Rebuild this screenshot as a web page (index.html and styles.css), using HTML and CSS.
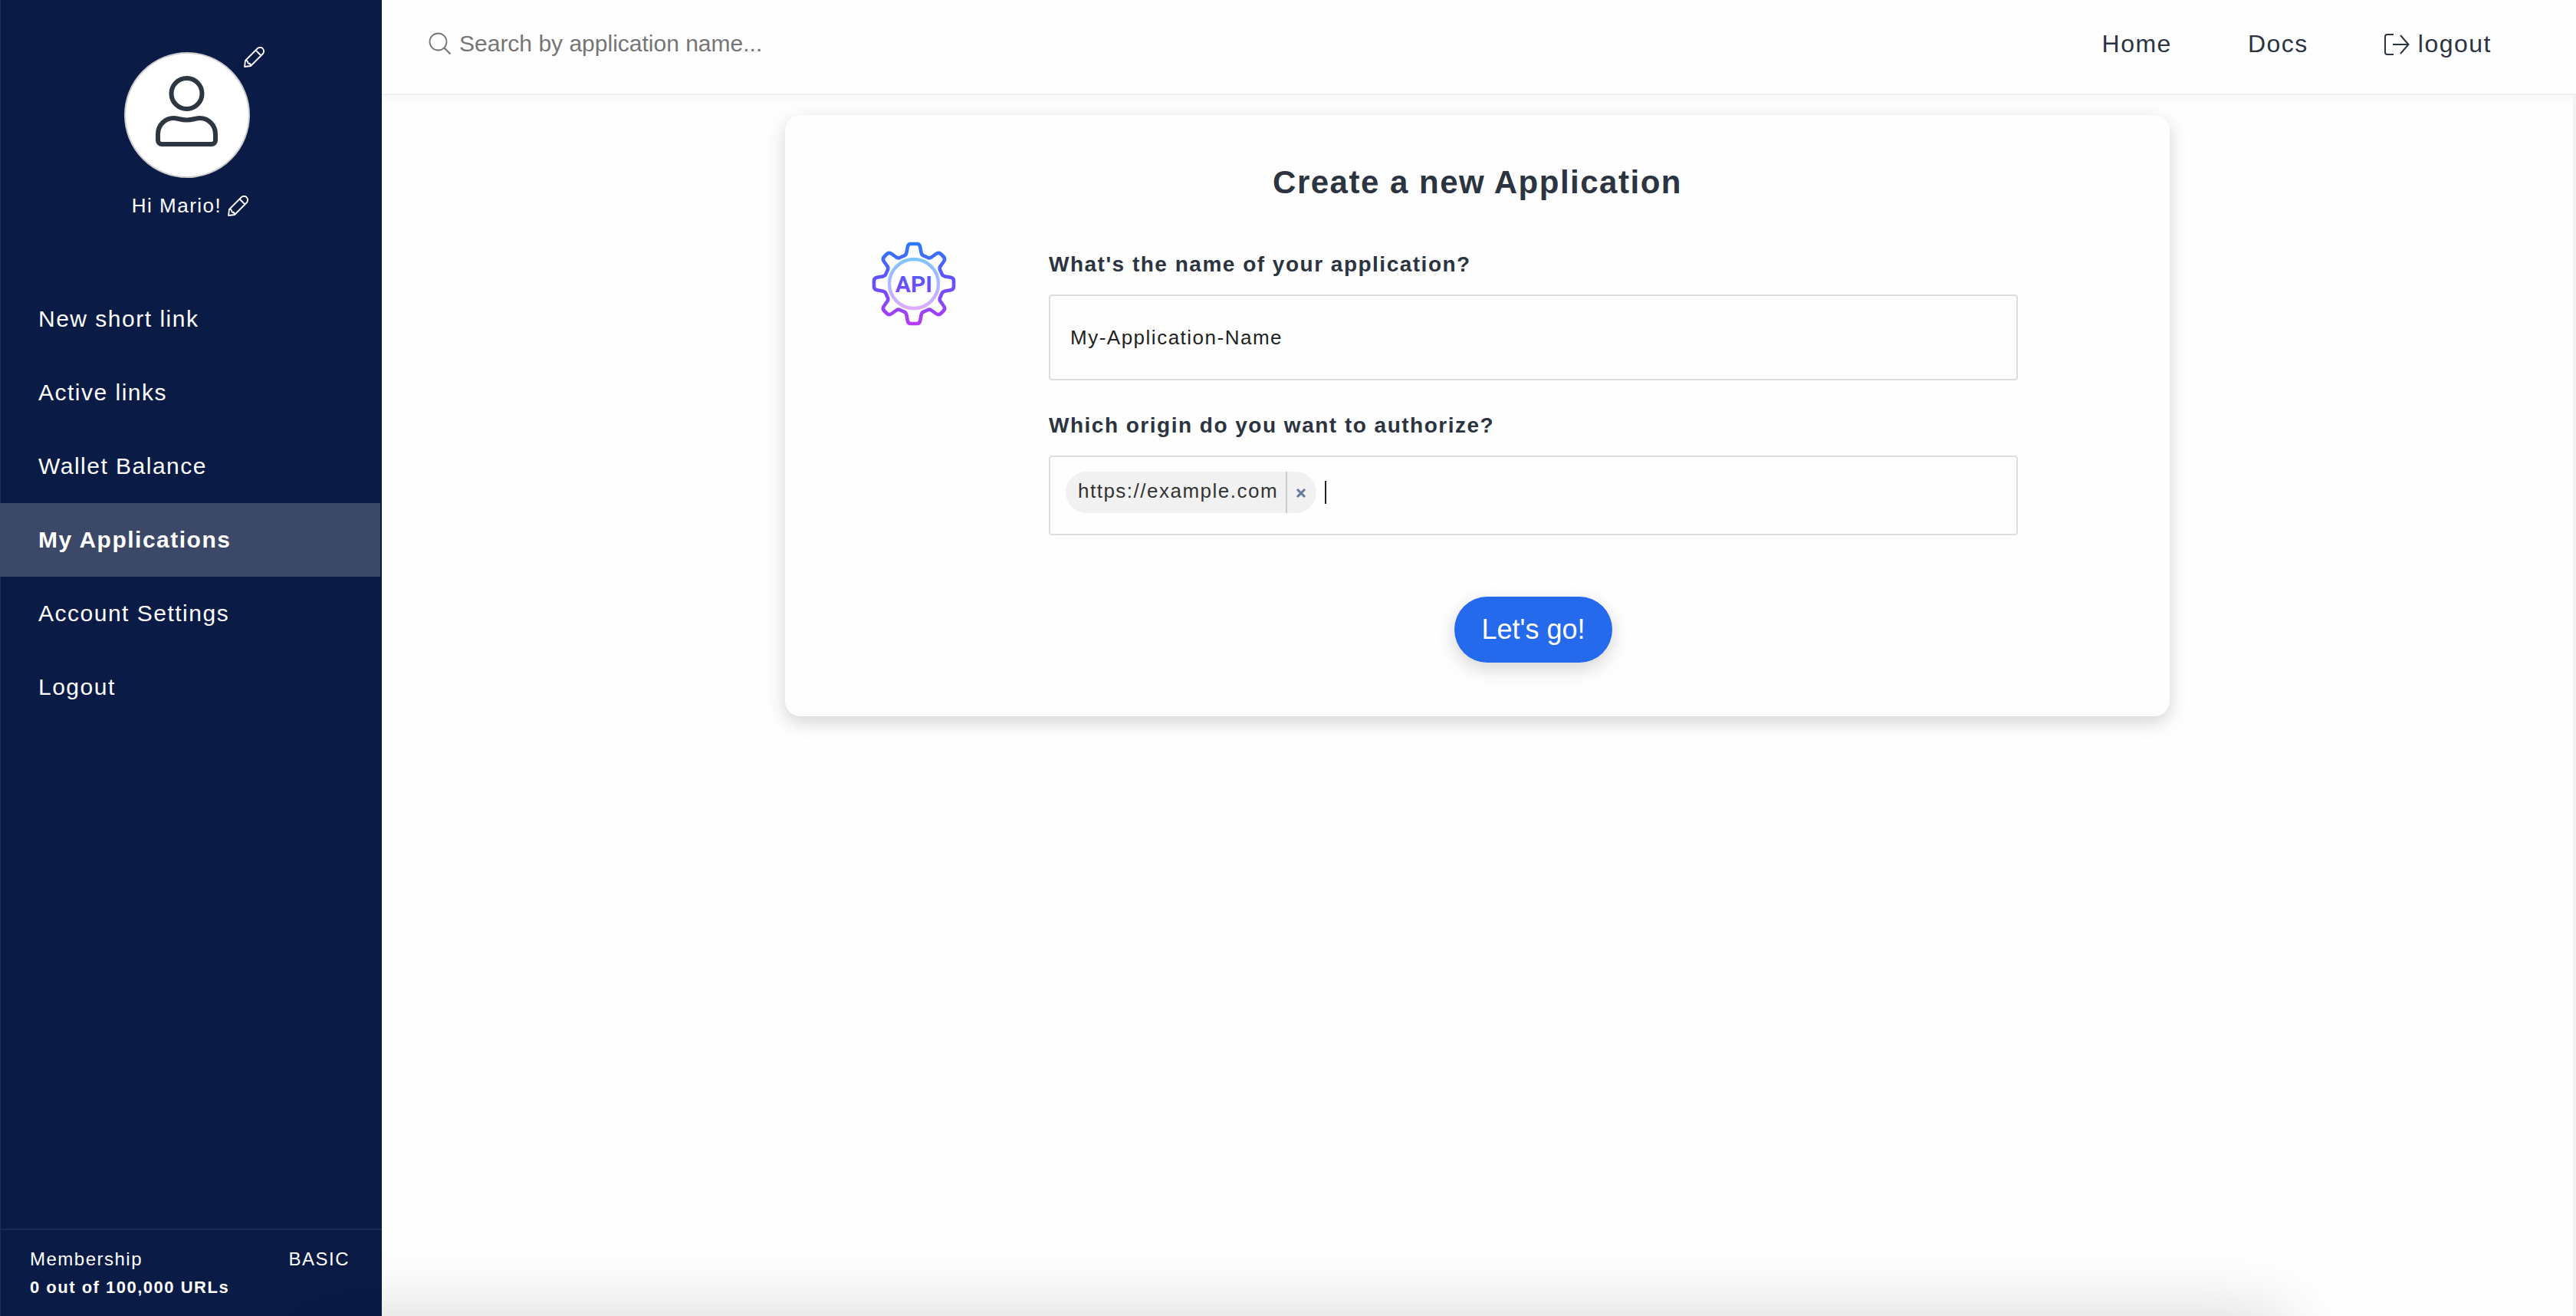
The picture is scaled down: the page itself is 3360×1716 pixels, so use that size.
FILE: index.html
```html
<!DOCTYPE html>
<html lang="en">
<head>
<meta charset="utf-8">
<meta name="viewport" content="width=device-width, initial-scale=1">
<title>Create a new Application</title>
<link rel="stylesheet" href="styles.css">
</head>
<body>
<svg class="sprite" aria-hidden="true">
  <symbol id="pencil" viewBox="0 0 27 27">
    <path d="M1 26 2 18 18 2Q21.500-.5 24.500 2 27.500 5.500 25 9L9 25ZM15.500 4.500 22.500 11.500M2 18Q5 17 5.500 21.500 9 21.500 9 25" fill="none" stroke="currentColor" stroke-width="1.800" stroke-linejoin="round"/>
  </symbol>
</svg>
<div class="app">
  <aside class="sidebar">
    <div class="profile">
      <div class="avatar">
        <svg class="avatar-icon" viewBox="203 99 82 92" aria-hidden="true">
          <g fill="none" stroke="currentColor" stroke-width="6">
            <circle cx="243.500" cy="122" r="20"/>
            <path d="M226.500 154C215 154 206 163.500 206 175V183a5 5 0 0 0 5 5H276a5 5 0 0 0 5-5V175C281 163.500 272 154 260.500 154c-5 0-9 2.500-17 2.500s-12-2.500-17-2.500z"/>
          </g>
        </svg>
        <button class="icon-button avatar-edit" type="button" aria-label="Edit picture"><svg><use href="#pencil"/></svg></button>
      </div>
      <div class="greeting">
        <span>Hi Mario!</span>
        <button class="icon-button" type="button" aria-label="Edit name"><svg><use href="#pencil"/></svg></button>
      </div>
    </div>
    <nav class="menu">
      <a href="#new">New short link</a>
      <a href="#links">Active links</a>
      <a href="#wallet">Wallet Balance</a>
      <a href="#applications" class="active" aria-current="page">My Applications</a>
      <a href="#settings">Account Settings</a>
      <a href="#logout">Logout</a>
    </nav>
    <div class="membership">
      <div class="plan"><span>Membership</span><span>BASIC</span></div>
      <div class="usage">0 out of 100,000 URLs</div>
    </div>
  </aside>
  <div class="main">
    <header class="topbar">
      <label class="search">
        <svg viewBox="0 0 30 30" aria-hidden="true"><g fill="none" stroke="currentColor" stroke-width="1.800"><circle cx="12.500" cy="12.500" r="11"/><path d="M20.500 20.500 28.500 28.500" stroke-width="2.200"/></g></svg>
        <input type="search" placeholder="Search by application name..." aria-label="Search">
      </label>
      <nav class="links">
        <a href="#home">Home</a>
        <a href="#docs">Docs</a>
        <a href="#logout"><svg viewBox="0 0 33 32" aria-hidden="true"><path d="M12 4H4Q1 4 1 7V27Q1 30 4 30H12M11 17H31.500M21 5 31.500 17 21 29" fill="none" stroke="currentColor" stroke-width="2"/></svg>logout</a>
      </nav>
    </header>
    <main class="content">
      <form class="card">
        <h1>Create a new Application</h1>
        <div class="card-body">
          <svg class="api-icon" viewBox="-55 -55 110 110" role="img" aria-label="API">
            <defs>
              <linearGradient id="outer" gradientUnits="userSpaceOnUse" x1="0" y1="-55" x2="0" y2="55">
                <stop offset="0" stop-color="#2b7bfb"/><stop offset=".5" stop-color="#6650fa"/><stop offset="1" stop-color="#b93af6"/>
              </linearGradient>
              <linearGradient id="inner" gradientUnits="userSpaceOnUse" x1="0" y1="-34" x2="0" y2="34">
                <stop offset="0" stop-color="#7cc6ff"/><stop offset="1" stop-color="#dfaaff"/>
              </linearGradient>
              <path id="quarter" d="M0-52H4Q7.500-52 8.200-48L9.500-41Q10-37 14-36L18.500-34Q21-33 23.500-35L29-39Q32.500-41.500 35.500-38.500L38.500-35.500Q41.500-32.500 39-29L35-23.500Q33-21 34-18.500L36-14Q37-10 41-9.500L48-8.200Q52-7.500 52-4V0"/>
              <mask id="gear" maskUnits="userSpaceOnUse" x="-55" y="-55" width="110" height="110">
                <g fill="none" stroke="#fff" stroke-width="4.600">
                  <use href="#quarter"/><use href="#quarter" transform="rotate(90)"/><use href="#quarter" transform="rotate(180)"/><use href="#quarter" transform="rotate(270)"/>
                </g>
              </mask>
            </defs>
            <rect x="-55" y="-55" width="110" height="110" fill="url(#outer)" mask="url(#gear)"/>
            <circle r="32" fill="none" stroke="url(#inner)" stroke-width="4.400"/>
            <text class="api-text" x="0" y="11" text-anchor="middle" fill="url(#outer)">API</text>
          </svg>
          <div class="fields">
            <label for="name">What's the name of your application?</label>
            <input class="box name" id="name" type="text" value="My-Application-Name">
            <label for="origin">Which origin do you want to authorize?</label>
            <div class="box tags">
              <span class="tag"><span class="tag-text">https://example.com</span><button type="button" aria-label="Remove https://example.com"><svg viewBox="0 0 14 14"><path d="M2 2 12 12M12 2 2 12" stroke="currentColor" stroke-width="3"/></svg></button></span>
              <span class="caret"></span>
              <input id="origin" type="text">
            </div>
            <button class="submit" type="submit">Let's go!</button>
          </div>
        </div>
      </form>
    </main>
  </div>
</div>
<div class="bottom-shade"></div>
</body>
</html>
```
FILE: styles.css
```css
* { box-sizing: border-box; }

body {
  margin: 0;
  font: 30px/36px "Liberation Sans", Arial, sans-serif;
  letter-spacing: 0.05em;
  color: #2b3440;
  background: #fefefe;
}

input, button { font: inherit; letter-spacing: inherit; }
a { color: inherit; text-decoration: none; }
.sprite { position: absolute; width: 0; height: 0; }

.app { display: flex; min-height: 100vh; }

/* Sidebar */
.sidebar {
  flex: 0 0 498px;
  display: flex;
  flex-direction: column;
  padding-right: 2px;
  color: #fff;
  background: #0a1b46;
  box-shadow: inset 1px 0 #202f57;
}

.profile {
  display: flex;
  flex-direction: column;
  align-items: center;
  gap: 18px;
  padding-top: 68px;
}

.avatar {
  position: relative;
  display: flex;
  justify-content: center;
  width: 164px;
  height: 164px;
  margin-right: 8px;
  padding-top: 29px;
  border: 2px solid #ccc;
  border-radius: 50%;
  color: #2d3742;
  background: #fff;
}
.avatar-icon { width: 82px; height: 92px; }

.icon-button {
  width: 27px;
  height: 27px;
  padding: 0;
  border: 0;
  color: #fff;
  background: none;
}
.icon-button svg { display: block; width: 27px; height: 27px; }
.avatar-edit { position: absolute; top: -9px; right: -21px; }

.greeting { display: flex; align-items: center; gap: 8px; font-size: 26px; }

.menu { margin-top: 82px; }
.menu a { display: block; padding: 30px 50px; }
.menu .active { font-weight: bold; background: #3c4868; }

.membership {
  margin: auto -2px 0 0;
  padding: 17px 42px 21px 39px;
  border-top: 2px solid #1e2c54;
}
.plan { display: flex; justify-content: space-between; font-size: 24px; line-height: 42px; }
.usage { font-size: 22px; font-weight: bold; line-height: 32px; }

/* Top bar */
.main { flex: 1; display: flex; flex-direction: column; min-width: 0; }

.topbar {
  display: flex;
  justify-content: space-between;
  align-items: center;
  height: 124px;
  padding: 0 110px 9px 61px;
  border-bottom: 2px solid #f0f0f0;
  box-shadow: 0 4px 12px rgba(0, 0, 0, 0.04);
}

.search { display: flex; flex: 0 1 700px; align-items: center; gap: 10px; color: #757575; }
.search svg { width: 30px; height: 30px; }
.search input {
  flex: 1;
  padding: 0;
  border: 0;
  outline: 0;
  letter-spacing: 0;
  background: none;
}
.search input::placeholder { color: #757575; }

.links { display: flex; gap: 99px; font-size: 32px; }
.links a { display: flex; align-items: center; gap: 11px; }
.links svg { width: 33px; height: 32px; }

/* Form card */
.content {
  flex: 1;
  padding: 26px 24px;
  border-right: 4px solid #f3f3f3;
}

.card {
  max-width: 1806px;
  margin: 0 auto;
  padding: 64px 198px 70px 113px;
  border-radius: 20px;
  background: #fefefe;
  box-shadow: 0 8px 24px rgba(0, 0, 0, 0.17);
}
.card h1 {
  margin: 0 -198px 0 -113px;
  font-size: 42px;
  line-height: 48px;
  text-align: center;
}

.card-body {
  display: grid;
  grid-template-columns: 110px 1fr;
  gap: 121px;
  padding-top: 53px;
}
.api-icon { width: 110px; height: 110px; }
.api-text { font: bold 30px Roboto, "Liberation Sans", sans-serif; letter-spacing: 0; }

.fields { display: flex; flex-direction: column; padding-top: 12px; }
.fields label { font-size: 28px; font-weight: bold; line-height: 36px; }

.box {
  width: 100%;
  margin: 21px 0 41px;
  border: 2px solid #ddd;
  border-radius: 4px;
  font-size: 26px;
  color: #222;
  background: #fefefe;
}
.name { height: 112px; padding: 0 26px; outline: 0; }

.tags { display: flex; align-items: center; height: 104px; margin-bottom: 80px; padding: 0 20px 8px; }
.tags input { flex: 1; min-width: 0; border: 0; outline: 0; background: none; }
.tag {
  display: flex;
  height: 54px;
  border-radius: 27px;
  line-height: 50px;
  color: #333;
  background: #f1f1f1;
  overflow: hidden;
}
.tag-text { padding: 0 10px 0 16px; }
.tag button {
  display: grid;
  place-items: center;
  width: 40px;
  padding: 2px 3px 0 0;
  border: 0;
  border-left: 2px solid #ccc;
  color: #667a9a;
  background: none;
}
.tag svg { width: 14px; height: 14px; }
.caret { width: 2px; height: 30px; margin-left: 11px; background: #222; }

.submit {
  align-self: center;
  height: 86px;
  padding: 0 36px;
  border: 0;
  border-radius: 43px;
  font-size: 36px;
  letter-spacing: 0;
  color: #fff;
  background: #256aec;
  box-shadow: 0 8px 24px rgba(0, 0, 0, 0.17);
}

/* Soft shade rising from the bottom edge of the window */
.bottom-shade {
  position: fixed;
  top: 100%;
  left: 380px;
  right: 380px;
  height: 100px;
  box-shadow: 0 0 90px rgba(0, 0, 0, 0.16);
  pointer-events: none;
}
```
